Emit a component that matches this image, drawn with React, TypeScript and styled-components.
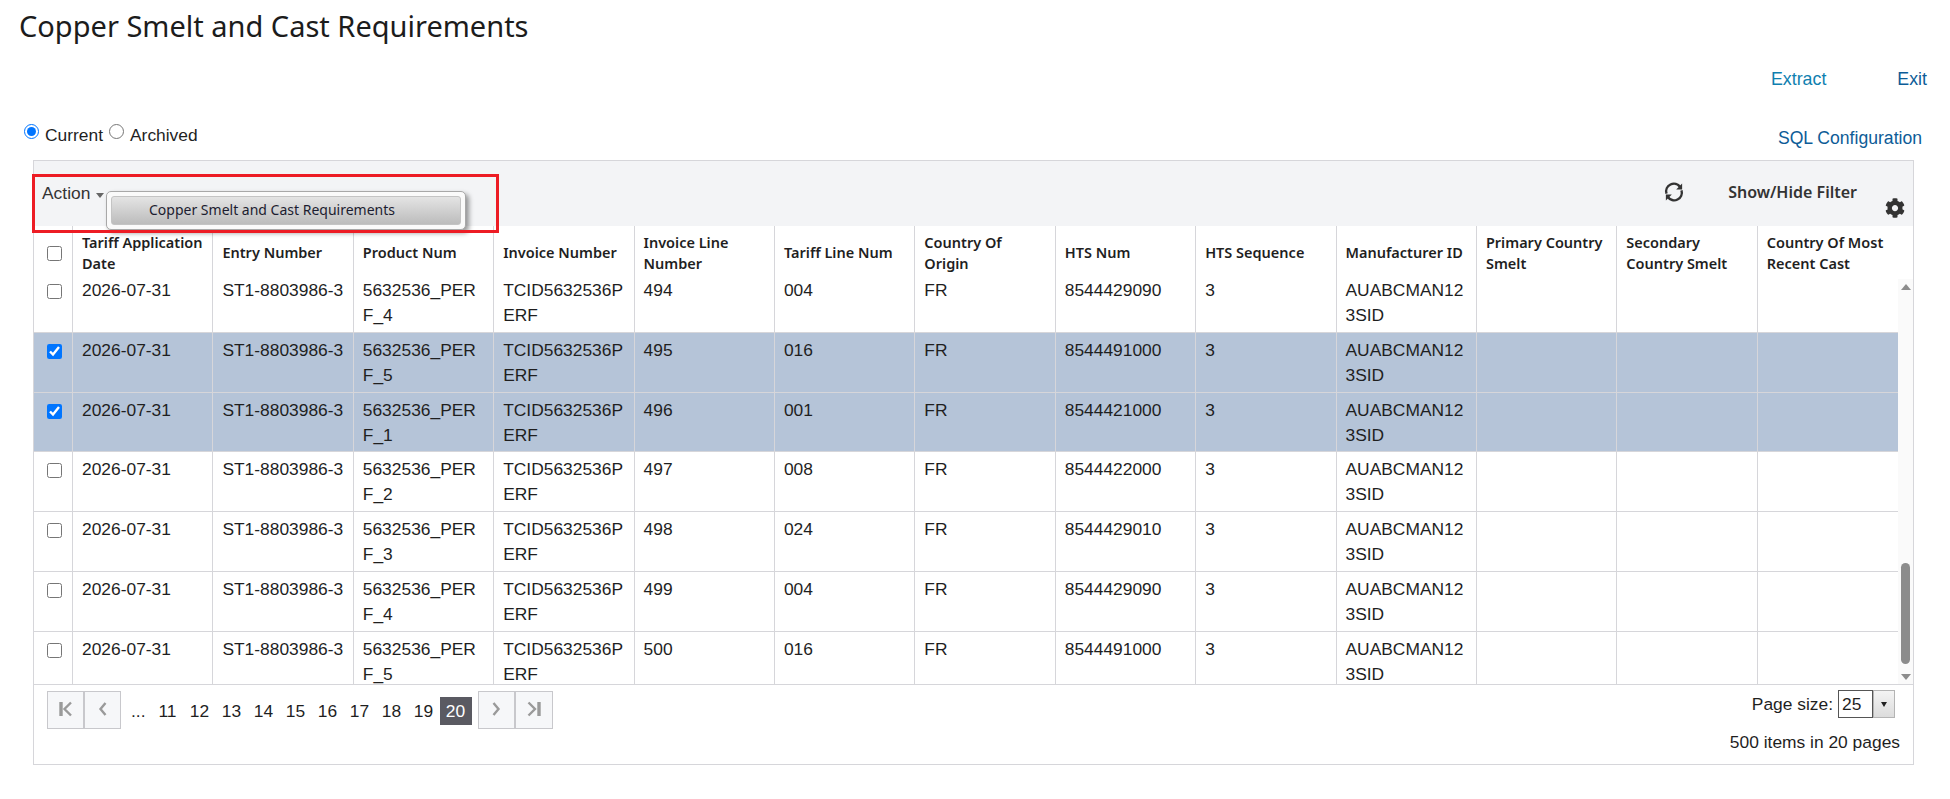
import styled, { createGlobalStyle } from "styled-components";
import { FaCog } from "react-icons/fa";

const COLUMNS = [
  "Tariff Application Date",
  "Entry Number",
  "Product Num",
  "Invoice Number",
  "Invoice Line Number",
  "Tariff Line Num",
  "Country Of Origin",
  "HTS Num",
  "HTS Sequence",
  "Manufacturer ID",
  "Primary Country Smelt",
  "Secondary Country Smelt",
  "Country Of Most Recent Cast",
];

const ROWS = [
  { line: "494", tariff: "004", hts: "8544429090", perf: "4", checked: false },
  { line: "495", tariff: "016", hts: "8544491000", perf: "5", checked: true },
  { line: "496", tariff: "001", hts: "8544421000", perf: "1", checked: true },
  { line: "497", tariff: "008", hts: "8544422000", perf: "2", checked: false },
  { line: "498", tariff: "024", hts: "8544429010", perf: "3", checked: false },
  { line: "499", tariff: "004", hts: "8544429090", perf: "4", checked: false },
  { line: "500", tariff: "016", hts: "8544491000", perf: "5", checked: false },
];

const PAGES = [11, 12, 13, 14, 15, 16, 17, 18, 19];

const GRID = "39px repeat(12, 140.4px) 1fr";

function App() {
  return (
    <Page>
      <GlobalStyle />
      <Title>Copper Smelt and Cast Requirements</Title>
      <LinkRow>
        <ExtractLink>Extract</ExtractLink>
        <ExitLink>Exit</ExitLink>
      </LinkRow>
      <OptionsRow>
        <RadioGroup>
          <Radio type="radio" name="state" defaultChecked />
          <RadioLabel>Current</RadioLabel>
          <Radio type="radio" name="state" />
          <RadioLabel>Archived</RadioLabel>
        </RadioGroup>
        <SqlLink>SQL Configuration</SqlLink>
      </OptionsRow>

      <Panel>
        <Toolbar>
          <ActionLabel>Action</ActionLabel>
          <ActionCaret />
          <Menu>
            <MenuItem>Copper Smelt and Cast Requirements</MenuItem>
          </Menu>
          <RedFrame />
          <ToolbarRight>
            <RefreshIcon viewBox="0 0 20 20">
              <path d="M3.2 11.5A7 7 0 0 1 15.6 5.4" />
              <path d="M16.8 8.5A7 7 0 0 1 4.4 14.6" />
              <path className="head" d="M17.4 2.2v5.6h-5.4z" />
              <path className="head" d="M2.6 17.8v-5.6h5.4z" />
            </RefreshIcon>
            <FilterLabel>Show/Hide Filter</FilterLabel>
            <GearSlot>
              <FaCog size={20} />
            </GearSlot>
          </ToolbarRight>
        </Toolbar>

        <HeaderRow>
          <HeaderCheck>
            <Check type="checkbox" />
          </HeaderCheck>
          {COLUMNS.map((name) => (
            <HeaderCell key={name}>{name}</HeaderCell>
          ))}
        </HeaderRow>

        <BodyFrame>
          <RowsViewport>
            <RowsTrack>
              {ROWS.map((row) => (
                <Row key={row.line} $selected={row.checked}>
                  <CheckCell>
                    <Check type="checkbox" defaultChecked={row.checked} />
                  </CheckCell>
                  <Cell>2026-07-31</Cell>
                  <EntryCell>ST1-8803986-3</EntryCell>
                  <Cell>{`5632536_PERF_${row.perf}`}</Cell>
                  <Cell>TCID5632536PERF</Cell>
                  <Cell>{row.line}</Cell>
                  <Cell>{row.tariff}</Cell>
                  <Cell>FR</Cell>
                  <Cell>{row.hts}</Cell>
                  <Cell>3</Cell>
                  <Cell>AUABCMAN123SID</Cell>
                  <Cell />
                  <Cell />
                  <Cell />
                </Row>
              ))}
            </RowsTrack>
          </RowsViewport>
          <Scrollbar>
            <ArrowUp />
            <ThumbTrack>
              <Thumb />
            </ThumbTrack>
            <ArrowDown />
          </Scrollbar>
        </BodyFrame>

        <Footer>
          <Pager>
            <PagerGroup>
              <PagerButton $joined>
                <PagerIcon viewBox="0 0 16 16">
                  <path d="M3 1v14" className="bar" />
                  <path d="M13 1.5 6.5 8l6.5 6.5" />
                </PagerIcon>
              </PagerButton>
              <PagerButton $joined>
                <PagerIcon viewBox="0 0 16 16">
                  <path d="M10.5 2 5.5 8l5 6" />
                </PagerIcon>
              </PagerButton>
            </PagerGroup>
            <PageList>
              <Ellipsis>...</Ellipsis>
              {PAGES.map((n) => (
                <PageNumber key={n}>{n}</PageNumber>
              ))}
              <CurrentPage>20</CurrentPage>
            </PageList>
            <PagerGroup>
              <PagerButton>
                <PagerIcon viewBox="0 0 16 16">
                  <path d="M5.5 2 10.5 8l-5 6" />
                </PagerIcon>
              </PagerButton>
              <PagerButton>
                <PagerIcon viewBox="0 0 16 16">
                  <path d="M2.5 1.5 9 8l-6.5 6.5" />
                  <path d="M13 1v14" className="bar" />
                </PagerIcon>
              </PagerButton>
            </PagerGroup>
          </Pager>
          <PageInfo>
            <PageSize>
              <span>Page size:</span>
              <SizeValue>25</SizeValue>
              <SizeButton>
                <SizeCaret />
              </SizeButton>
            </PageSize>
            <ItemCount>500 items in 20 pages</ItemCount>
          </PageInfo>
        </Footer>
      </Panel>
    </Page>
  );
}

const GlobalStyle = createGlobalStyle`
  html, body {
    margin: 0;
    background: #fff;
  }
  body {
    font-family: "Liberation Sans", Arial, sans-serif;
    font-size: 17.4px;
    color: #1f1f1f;
  }
`;

const Page = styled.div`
  width: 1950px;
  height: 799px;
  overflow: hidden;
`;

const Title = styled.h1`
  margin: 0;
  padding: 6px 0 0 19px;
  height: 57px;
  box-sizing: border-box;
  font-family: "Noto Sans", sans-serif;
  font-size: 29px;
  line-height: 40px;
  font-weight: 400;
  color: #1c1c1c;
`;

const LinkRow = styled.div`
  display: flex;
  justify-content: flex-end;
  height: 40px;
  padding-right: 23px;
  font-size: 17.8px;
  line-height: 44px;
`;

const ExtractLink = styled.a`
  color: #0f7fb0;
  margin-right: 71px;
`;

const ExitLink = styled.a`
  color: #0d5c97;
`;

const OptionsRow = styled.div`
  display: flex;
  justify-content: space-between;
  height: 63px;
  padding: 26px 28px 0 24px;
  box-sizing: border-box;
  line-height: 24px;
`;

const RadioGroup = styled.div`
  display: flex;
  align-items: flex-start;
`;

const Radio = styled.input`
  width: 15px;
  height: 15px;
  margin: 1px 6px 0 0;
`;

const RadioLabel = styled.label`
  margin-right: 6px;
`;

const SqlLink = styled.a`
  color: #0d5c97;
  padding-top: 3px;
  font-size: 17.6px;
`;

const Panel = styled.div`
  width: 1881px;
  margin-left: 33px;
  box-sizing: border-box;
  border: 1px solid #d6d6da;
`;

const Toolbar = styled.div`
  position: relative;
  display: flex;
  align-items: flex-start;
  height: 65px;
  background: #f3f4f6;
`;

const ActionLabel = styled.span`
  margin: 20px 0 0 8px;
  line-height: 24px;
  color: #333;
`;

const ActionCaret = styled.span`
  margin: 32px 0 0 6px;
  border-left: 4px solid transparent;
  border-right: 4px solid transparent;
  border-top: 5px solid #666;
`;

const Menu = styled.div`
  position: absolute;
  left: 72px;
  top: 30px;
  width: 360px;
  height: 39px;
  box-sizing: border-box;
  padding: 4px;
  background: #fafafa;
  border: 1px solid #a8a8a8;
  border-radius: 5px;
  box-shadow: 3px 3px 5px rgba(0, 0, 0, 0.4);
  z-index: 2;
`;

const MenuItem = styled.div`
  height: 100%;
  padding-left: 37px;
  box-sizing: border-box;
  border: 1px solid #c4c4c4;
  border-radius: 3px;
  background: linear-gradient(#e4e4e4, #bcbcbc);
  font-family: "Noto Sans", sans-serif;
  font-size: 14px;
  line-height: 26px;
  color: #1c1c30;
`;

const RedFrame = styled.div`
  position: absolute;
  left: -2px;
  top: 13px;
  width: 467px;
  height: 59px;
  box-sizing: border-box;
  border: 3px solid #ed1c24;
  z-index: 3;
  pointer-events: none;
`;

const ToolbarRight = styled.div`
  margin-left: auto;
  display: flex;
  align-items: flex-start;
`;

const RefreshIcon = styled.svg`
  width: 22px;
  height: 22px;
  margin-top: 20px;
  fill: none;
  stroke: #333;
  stroke-width: 2.2;

  .head {
    fill: #333;
    stroke: none;
  }
`;

const FilterLabel = styled.span`
  margin: 19px 0 0 43px;
  font-family: "Noto Sans", sans-serif;
  font-size: 16px;
  font-weight: 600;
  line-height: 24px;
  color: #333;
`;

const GearSlot = styled.span`
  margin: 37px 8px 0 28px;
  color: #333;
  height: 20px;
`;

const HeaderRow = styled.div`
  display: grid;
  grid-template-columns: ${GRID};
  height: 53px;
  background: #fff;
`;

const HeaderCheck = styled.div`
  display: flex;
  align-items: center;
  justify-content: center;
  border-right: 1px solid #d6d6da;
  padding: 2px 0 0 3px;
`;

const HeaderCell = styled.div`
  display: flex;
  align-items: center;
  padding: 0 8px 0 9px;
  border-right: 1px solid #d6d6da;
  font-family: "Noto Sans", sans-serif;
  font-size: 14.5px;
  font-weight: 600;
  line-height: 21px;
  color: #1f1f1f;

  &:last-child {
    border-right: 0;
  }
`;

const Check = styled.input`
  width: 15px;
  height: 15px;
  margin: 0;
`;

const BodyFrame = styled.div`
  display: flex;
  height: 405px;
`;

const RowsViewport = styled.div`
  flex: 1;
  min-width: 0;
  overflow: hidden;
`;

const RowsTrack = styled.div`
  margin-top: -6px;
`;

const Row = styled.div<{ $selected: boolean }>`
  display: grid;
  grid-template-columns: ${GRID};
  height: 59.8px;
  box-sizing: border-box;
  border-bottom: 1px solid #d6d6da;
  background: ${(p) => (p.$selected ? "#b5c4d8" : "#fff")};
`;

const Cell = styled.div`
  padding: 5px 10px 0 9px;
  border-right: 1px solid #d6d6da;
  line-height: 25px;
  overflow-wrap: anywhere;

  &:last-child {
    border-right: 0;
  }
`;

const EntryCell = styled(Cell)`
  padding-right: 0;
  white-space: nowrap;
`;

const CheckCell = styled.div`
  padding: 11px 0 0 3px;
  display: flex;
  justify-content: center;
  align-items: flex-start;
  border-right: 1px solid #d6d6da;
`;

const Scrollbar = styled.div`
  width: 15px;
  background: #fafafa;
  display: flex;
  flex-direction: column;
  align-items: center;
`;

const ArrowUp = styled.span`
  margin-top: 5px;
  border-left: 5px solid transparent;
  border-right: 5px solid transparent;
  border-bottom: 6px solid #8c8c8c;
`;

const ThumbTrack = styled.div`
  flex: 1;
  width: 100%;
  display: flex;
  justify-content: center;
  align-items: flex-end;
  padding-bottom: 10px;
`;

const Thumb = styled.div`
  width: 9px;
  height: 101px;
  border-radius: 5px;
  background: #8c8c8c;
`;

const ArrowDown = styled.span`
  margin-bottom: 4px;
  border-left: 5px solid transparent;
  border-right: 5px solid transparent;
  border-top: 6px solid #8c8c8c;
`;

const Footer = styled.div`
  display: flex;
  justify-content: space-between;
  height: 80px;
  box-sizing: border-box;
  border-top: 1px solid #d6d6da;
`;

const Pager = styled.div`
  display: flex;
  align-items: flex-start;
  padding: 6px 0 0 13px;
`;

const PagerGroup = styled.div`
  display: flex;
`;

const PagerButton = styled.div<{ $joined?: boolean }>`
  width: ${(p) => (p.$joined ? "37px" : "37.5px")};
  height: 38px;
  box-sizing: border-box;
  display: flex;
  align-items: center;
  justify-content: center;
  background: #f6f7f9;
  border: 1px solid #c8c8cc;
  padding-bottom: 3px;

  & + & {
    margin-left: ${(p) => (p.$joined ? "-1px" : "0")};
  }
`;

const PagerIcon = styled.svg`
  width: 16px;
  height: 16px;
  fill: none;
  stroke: #9a9a9a;
  stroke-width: 2.4;

  .bar {
    stroke-width: 3.4;
  }
`;

const PageList = styled.div`
  display: flex;
  align-items: center;
  height: 28px;
  margin: 6px 6px 0 4px;
  line-height: 28px;
`;

const PageNumber = styled.span`
  width: 32px;
  text-align: center;
`;

const Ellipsis = styled(PageNumber)`
  width: 26.5px;
`;

const CurrentPage = styled(PageNumber)`
  background: #5a5a62;
  color: #fff;
`;

const PageInfo = styled.div`
  display: flex;
  flex-direction: column;
  align-items: flex-end;
  padding: 5px 13px 0 0;
`;

const PageSize = styled.div`
  display: flex;
  align-items: center;
  height: 28px;
  padding-right: 5px;
`;

const SizeValue = styled.span`
  width: 35px;
  height: 28px;
  margin-left: 5px;
  padding-left: 3px;
  box-sizing: border-box;
  border: 1px solid #555;
  line-height: 27px;
`;

const SizeButton = styled.span`
  width: 22px;
  height: 28px;
  box-sizing: border-box;
  display: flex;
  align-items: center;
  justify-content: center;
  background: linear-gradient(#f4f4f4, #dcdcdc);
  border: 1px solid #b4b4b4;
`;

const SizeCaret = styled.span`
  border-left: 3px solid transparent;
  border-right: 3px solid transparent;
  border-top: 5px solid #222;
`;

const ItemCount = styled.div`
  margin-top: 12px;
  line-height: 24px;
`;

export default App;
